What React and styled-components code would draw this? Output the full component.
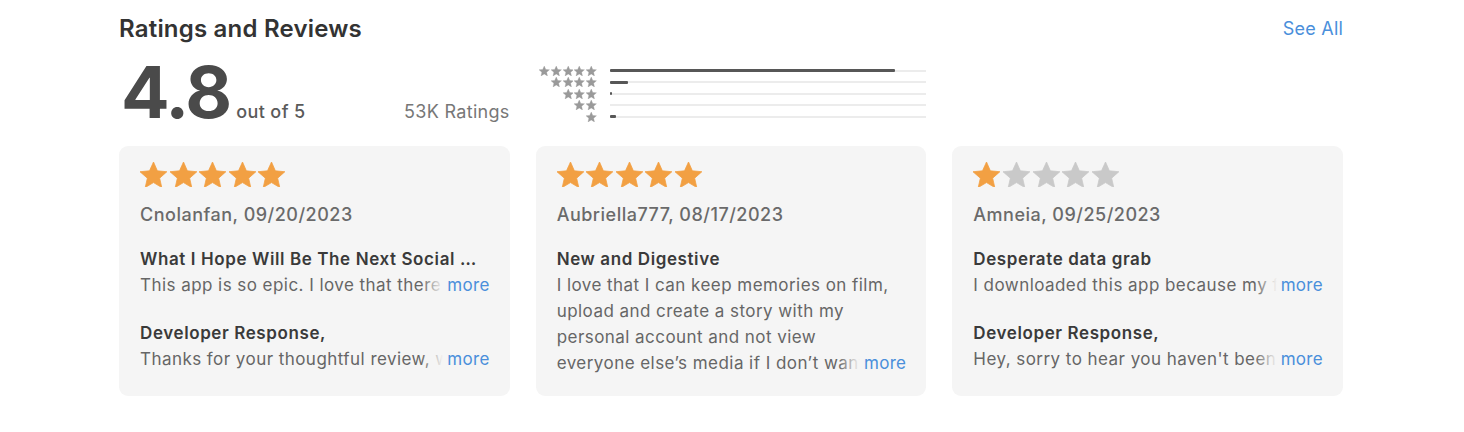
import React from 'react';
import styled, { createGlobalStyle } from 'styled-components';

const GlobalStyle = createGlobalStyle`
body {
  margin: 0;
  background: #fff;
  font-family: Inter, "Liberation Sans", Arial, sans-serif;
  -webkit-font-smoothing: antialiased;
}
`;

const Section = styled.section`
width: 1224px;
margin-left: 119px;
padding-top: 14px;
`;

const Header = styled.div`
display: flex;
justify-content: space-between;
align-items: center;
height: 28px;
`;
const Title = styled.h2`
margin: 0;
font-size: 24px;
font-weight: 600;
color: #333;
letter-spacing: 0.2px;
`;
const SeeAll = styled.a`
font-size: 18px;
letter-spacing: 0.2px;
color: #4a8fdb;
text-decoration: none;
cursor: pointer;
`;

const Grid = styled.div`
display: grid;
grid-template-columns: repeat(3, minmax(0, 1fr));
column-gap: 26px;
`;

const Summary = styled(Grid)`
margin-top: 14px;
height: 72px;
`;
const ScoreBox = styled.div`
display: flex;
align-items: baseline;
justify-content: space-between;
`;
const Score = styled.div`
display: flex;
align-items: baseline;
`;
const Big = styled.span`
font-size: 72px;
line-height: 72px;
font-weight: 700;
color: #4a4a4a;
letter-spacing: -2px;
margin-left: 2px;
`;
const OutOf = styled.span`
font-size: 18px;
font-weight: 500;
letter-spacing: 0.4px;
color: #5a5a5a;
margin-left: 6px;
`;
const Count = styled.span`
font-size: 18px;
letter-spacing: 0.3px;
color: #777;
`;

const Histogram = styled.div`
padding-top: 9px;
display: flex;
flex-direction: column;
`;
const HistRow = styled.div`
display: grid;
grid-template-columns: 61px 1fr;
column-gap: 13px;
align-items: center;
height: 11.5px;
`;
const StarRow = styled.div`
display: flex;
justify-content: ${(p) => (p.$right ? 'flex-end' : 'flex-start')};
gap: ${(p) => p.$gap}px;
`;
const Track = styled.div`
height: 2px;
background: #ececec;
`;
const Fill = styled.div`
height: 3px;
margin-top: -0.5px;
background: #575757;
border-radius: 1px;
`;

const Cards = styled(Grid)`
margin-top: 18px;
`;
const Card = styled.article`
min-width: 0;
background: #f5f5f5;
border-radius: 9px;
padding: 16px 20px 20px 21px;
`;
const Author = styled.div`
margin-top: 17px;
font-size: 18px;
line-height: 22px;
font-weight: 500;
letter-spacing: 0.5px;
color: #6a6a6a;
`;
const ReviewTitle = styled.div`
margin-top: ${(p) => p.$top}px;
font-size: 17px;
line-height: 26px;
font-weight: 600;
letter-spacing: 0.6px;
color: #3a3a3a;
white-space: nowrap;
overflow: hidden;
text-overflow: ellipsis;
`;
const Body = styled.div`
position: relative;
font-size: 17px;
line-height: 26px;
letter-spacing: 0.45px;
color: #666;
`;
const BodyText = styled.div`
max-height: ${(p) => p.$lines * 26}px;
overflow: hidden;
padding-right: ${(p) => (p.$lines === 1 ? 0 : 10)}px;
white-space: ${(p) => (p.$lines === 1 ? 'nowrap' : 'normal')};
`;
const More = styled.button`
position: absolute;
right: 0;
bottom: 0;
border: none;
padding: 0 0 0 26px;
font-family: inherit;
font-size: 17px;
line-height: 26px;
letter-spacing: 0.3px;
color: #4a8fdb;
background: linear-gradient(to right, rgba(245, 245, 245, 0), #f5f5f5 22px);
cursor: pointer;
`;

const STAR = 'M12 2l2.9 6.6 7.1.7-5.4 4.8 1.6 7-6.2-3.7-6.2 3.7 1.6-7L1.9 9.3l7.1-.7z';

const Star = ({ size, color }) => (
  <svg width={size} height={size * 0.94} viewBox="1.9 2 20.2 19" fill={color}>
    <path d={STAR} strokeLinejoin="round" stroke={color} strokeWidth="0.6" />
  </svg>
);

const Stars = ({ count, filled, size, gap, right, on, off }) => (
  <StarRow $gap={gap} $right={right}>
    {Array.from({ length: count }).map((_, i) => (
      <Star key={i} size={size} color={i < filled ? on : off} />
    ))}
  </StarRow>
);

const bars = [90, 5.7, 0.8, 0, 2];

const reviews = [
  {
    rating: 5,
    author: 'Cnolanfan, 09/20/2023',
    title: 'What I Hope Will Be The Next Social Media App',
    body: 'This app is so epic. I love that there is no algorithm and you can just see your friends.',
    lines: 1,
    response: 'Thanks for your thoughtful review, we really appreciate it and are glad you like it!',
  },
  {
    rating: 5,
    author: 'Aubriella777, 08/17/2023',
    title: 'New and Digestive',
    body: 'I love that I can keep memories on film, upload and create a story with my personal account and not view everyone else\u2019s media if I don\u2019t want to see it.',
    lines: 4,
  },
  {
    rating: 1,
    author: 'Amneia, 09/25/2023',
    title: 'Desperate data grab',
    body: 'I downloaded this app because my friends were using it to share photos.',
    lines: 1,
    response: "Hey, sorry to hear you haven't been enjoying the app so far.",
  },
];

const Clamp = ({ lines, children }) => (
  <Body>
    <BodyText $lines={lines}>{children}</BodyText>
    <More>more</More>
  </Body>
);

const Review = ({ r }) => (
  <Card>
    <Stars count={5} filled={r.rating} size={27} gap={2.6} on="#f2a043" off="#c9c9c9" />
    <Author>{r.author}</Author>
    <ReviewTitle $top={20}>{r.title}</ReviewTitle>
    <Clamp lines={r.lines}>{r.body}</Clamp>
    {r.response && (
      <>
        <ReviewTitle $top={22}>Developer Response,</ReviewTitle>
        <Clamp lines={1}>{r.response}</Clamp>
      </>
    )}
  </Card>
);

export default function App() {
  return (
    <>
      <GlobalStyle />
      <Section>
        <Header>
          <Title>Ratings and Reviews</Title>
          <SeeAll>See All</SeeAll>
        </Header>
        <Summary>
          <ScoreBox>
            <Score>
              <Big>4.8</Big>
              <OutOf>out of 5</OutOf>
            </Score>
            <Count>53K Ratings</Count>
          </ScoreBox>
          <Histogram>
            {bars.map((pct, i) => (
              <HistRow key={i}>
                <Stars count={5 - i} filled={5 - i} size={10.5} gap={1.2} right on="#9a9a9a" off="#9a9a9a" />
                <Track>
                  <Fill style={{ width: `${pct}%` }} />
                </Track>
              </HistRow>
            ))}
          </Histogram>
        </Summary>
        <Cards>
          {reviews.map((r) => (
            <Review key={r.author} r={r} />
          ))}
        </Cards>
      </Section>
    </>
  );
}
